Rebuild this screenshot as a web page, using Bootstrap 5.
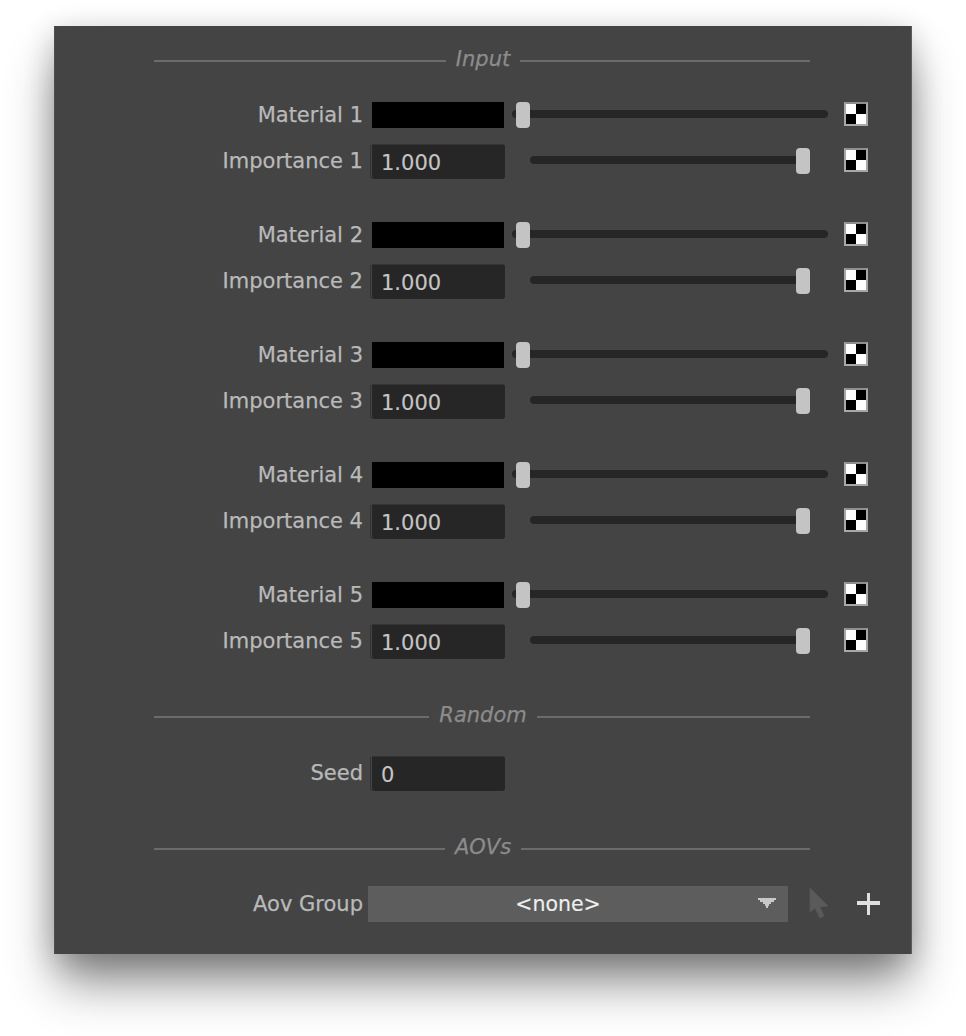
<!DOCTYPE html>
<html lang="en">
<head>
<meta charset="utf-8">
<title>Input</title>
<link href="https://cdn.jsdelivr.net/npm/bootstrap@5.3.0/dist/css/bootstrap.min.css" rel="stylesheet">
<style>
html,body{background:#fff;overflow:hidden}
body{width:966px;height:1036px;padding:26px 0 0 54px;font-family:"DejaVu Sans",sans-serif;font-size:21px;line-height:24px}
.panel-win{width:858px;height:928px;background:#444;padding:22px 0 0;box-shadow:0 32px 46px -4px rgba(0,0,0,.46),0 6px 28px rgba(0,0,0,.2);border-left:1px solid #4e4e4e;border-right:1px solid #5c5c5c}
.sect{margin:0 0 0 99px;width:656px;height:24px;color:#8c8c8c;font-style:italic;-webkit-text-stroke:.25px #8c8c8c}
.sect::before,.sect::after{content:"";flex:1 1 0;height:2px;background:#6b6b6b;margin-top:2px}
.sect::before{flex-basis:2px}
.sect span{padding:0 10px;margin-top:-2px}
.lbl{width:308px;flex:none;color:#b9b9b9;text-align:right;white-space:nowrap;-webkit-text-stroke:.25px #b9b9b9}
.m-row{height:26px}
.i-row{height:36px;margin-top:16px}
.i-row .lbl{margin-top:-2px}
.grp{margin-top:42px}
.grp.first{margin-top:30px}
.swatch{width:132px;height:26px;background:#000;margin-left:9px;flex:none}
.numbox{width:133px;height:34px;margin:1px 0 0 9px;flex:none;align-self:flex-start;background:#262626;box-shadow:-1px 0 0 #444,-2px 0 0 #333,0 -1px 0 #333;padding:1px 0 0 9px;border-radius:0 2px 3px 3px;color:#c4c4c4;line-height:34px;-webkit-text-stroke:.15px #c4c4c4}
.trk{height:8px;background:#262626;border-radius:4px;flex:none}
.trk.t-m{width:316px;margin-left:8px;margin-top:-2px;padding-left:4px}
.trk.t-i{width:280px;margin-left:25px;margin-top:-4px}
.knob{width:14px;height:26px;background:#c4c4c4;border-radius:4px;flex:none;margin-top:2px}
.chk{width:24px;height:24px;flex:none;border:2px solid #a8a8a8;border-top-color:#8f8f8f;display:grid;grid-template-columns:10px 10px;grid-template-rows:10px 10px;margin-top:-2px}
.chk i{display:block}
.chk .w{background:#fff}
.chk .b{background:#000}
.t-m + .chk{margin-left:16px}
.t-i + .chk{margin-left:34px;margin-top:-4px}
.sect.s2{margin-top:44px}
.sect.s3{margin-top:44px}
.i-row.seed{margin-top:28px}
.aov{height:36px;margin-top:26px}
.aov .lbl{width:308px}
.dd{width:420px;height:36px;margin-left:5px;background:#5d5d5d;color:#eee;flex:none;padding-right:40px;position:relative;font-size:20.5px;-webkit-text-stroke:.15px #eee}
.dd svg{position:absolute;left:390px;top:12px}
.cur{margin-left:21px;flex:none}
.plus{margin-left:26px;flex:none}
</style>
</head>
<body>
<div class="panel-win">
  <div class="sect d-flex align-items-center"><span>Input</span></div>

  <div class="grp first">
    <div class="m-row d-flex align-items-center"><div class="lbl">Material 1</div><div class="swatch"></div><div class="trk t-m d-flex align-items-center justify-content-start"><div class="knob"></div></div><div class="chk"><i class="w"></i><i class="b"></i><i class="b"></i><i class="w"></i></div></div>
    <div class="i-row d-flex align-items-center"><div class="lbl">Importance 1</div><div class="numbox">1.000</div><div class="trk t-i d-flex align-items-center justify-content-end"><div class="knob"></div></div><div class="chk"><i class="w"></i><i class="b"></i><i class="b"></i><i class="w"></i></div></div>
  </div>
  <div class="grp">
    <div class="m-row d-flex align-items-center"><div class="lbl">Material 2</div><div class="swatch"></div><div class="trk t-m d-flex align-items-center justify-content-start"><div class="knob"></div></div><div class="chk"><i class="w"></i><i class="b"></i><i class="b"></i><i class="w"></i></div></div>
    <div class="i-row d-flex align-items-center"><div class="lbl">Importance 2</div><div class="numbox">1.000</div><div class="trk t-i d-flex align-items-center justify-content-end"><div class="knob"></div></div><div class="chk"><i class="w"></i><i class="b"></i><i class="b"></i><i class="w"></i></div></div>
  </div>
  <div class="grp">
    <div class="m-row d-flex align-items-center"><div class="lbl">Material 3</div><div class="swatch"></div><div class="trk t-m d-flex align-items-center justify-content-start"><div class="knob"></div></div><div class="chk"><i class="w"></i><i class="b"></i><i class="b"></i><i class="w"></i></div></div>
    <div class="i-row d-flex align-items-center"><div class="lbl">Importance 3</div><div class="numbox">1.000</div><div class="trk t-i d-flex align-items-center justify-content-end"><div class="knob"></div></div><div class="chk"><i class="w"></i><i class="b"></i><i class="b"></i><i class="w"></i></div></div>
  </div>
  <div class="grp">
    <div class="m-row d-flex align-items-center"><div class="lbl">Material 4</div><div class="swatch"></div><div class="trk t-m d-flex align-items-center justify-content-start"><div class="knob"></div></div><div class="chk"><i class="w"></i><i class="b"></i><i class="b"></i><i class="w"></i></div></div>
    <div class="i-row d-flex align-items-center"><div class="lbl">Importance 4</div><div class="numbox">1.000</div><div class="trk t-i d-flex align-items-center justify-content-end"><div class="knob"></div></div><div class="chk"><i class="w"></i><i class="b"></i><i class="b"></i><i class="w"></i></div></div>
  </div>
  <div class="grp">
    <div class="m-row d-flex align-items-center"><div class="lbl">Material 5</div><div class="swatch"></div><div class="trk t-m d-flex align-items-center justify-content-start"><div class="knob"></div></div><div class="chk"><i class="w"></i><i class="b"></i><i class="b"></i><i class="w"></i></div></div>
    <div class="i-row d-flex align-items-center"><div class="lbl">Importance 5</div><div class="numbox">1.000</div><div class="trk t-i d-flex align-items-center justify-content-end"><div class="knob"></div></div><div class="chk"><i class="w"></i><i class="b"></i><i class="b"></i><i class="w"></i></div></div>
  </div>

  <div class="sect s2 d-flex align-items-center"><span>Random</span></div>
  <div class="i-row seed d-flex align-items-center"><div class="lbl">Seed</div><div class="numbox">0</div></div>

  <div class="sect s3 d-flex align-items-center"><span>AOVs</span></div>
  <div class="aov d-flex align-items-center">
    <div class="lbl">Aov Group</div>
    <div class="dd d-flex align-items-center justify-content-center">&lt;none&gt;<svg width="18" height="10" viewBox="0 0 18 10"><path d="M0 0H18V2H16V4H13V6H11V8H10V10H8V8H7V6H5V4H2V2H0Z" fill="#c8c8c8"/></svg></div>
    <svg class="cur" width="22" height="34" viewBox="0 0 22 34"><path d="M1 1L1 25L6 21L11 31L15 29L11 20L19 19Z" fill="#5a5a5a" stroke="#555" stroke-width="1"/></svg>
    <svg class="plus" width="23" height="22" viewBox="0 0 23 22"><path d="M0 8H10V0H13V8H23V12H13V22H10V12H0Z" fill="#e0e0e0"/></svg>
  </div>
</div>
</body>
</html>
